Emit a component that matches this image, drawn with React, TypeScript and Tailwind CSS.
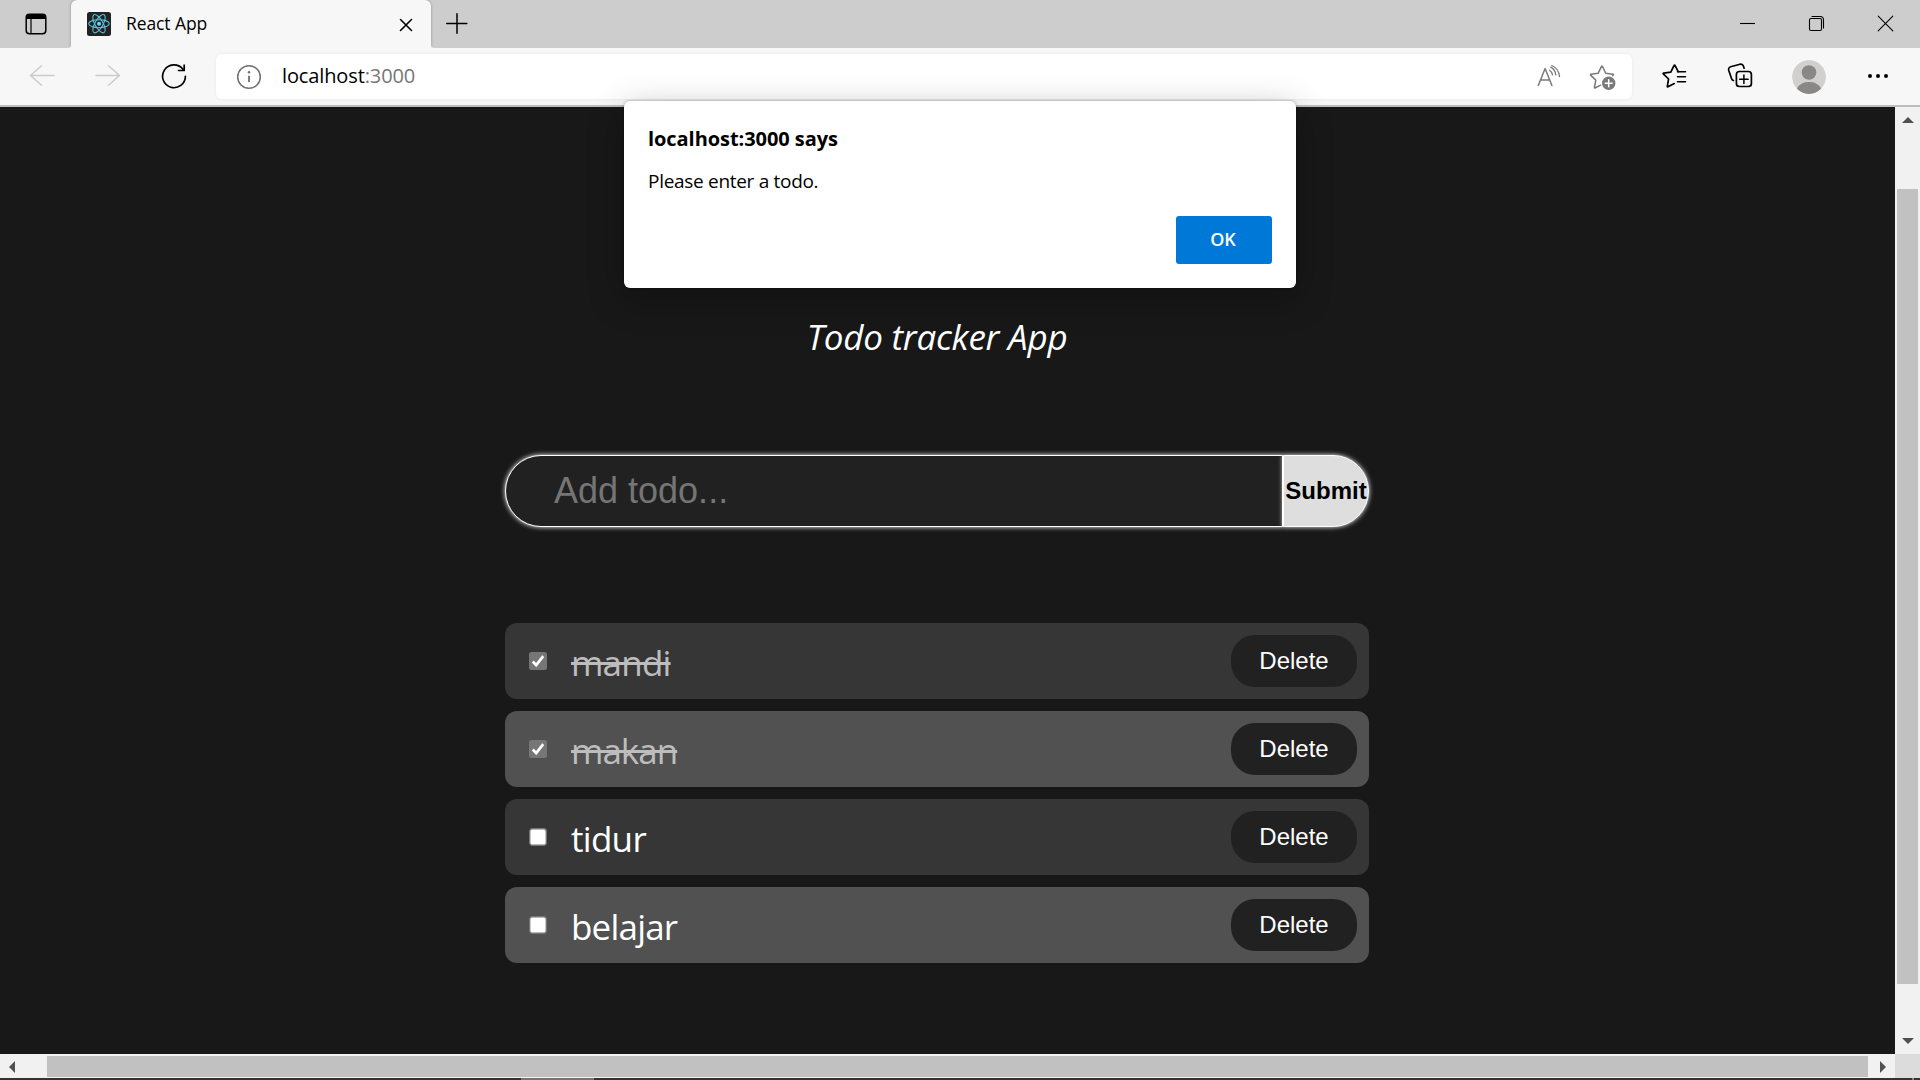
import type { ReactNode } from 'react';

type IconProps = { box: string; className: string; children: ReactNode };

function Icon({ box, className, children }: IconProps) {
  return (
    <svg
      viewBox={box}
      className={`shrink-0 ${className}`}
      fill="none"
      stroke="currentColor"
      strokeWidth="1.5"
      strokeLinecap="round"
      strokeLinejoin="round"
    >
      {children}
    </svg>
  );
}

function TabBar() {
  return (
    <div className="flex h-12 items-start bg-[#cdcdcd] text-black">
      <Icon box="0 0 24 24" className="ml-6 mt-3 h-6 w-6">
        <rect x="2.2" y="2.2" width="19.6" height="19.6" rx="3.2" />
        <path d="M2 7V5a3 3 0 0 1 3-3h14a3 3 0 0 1 3 3v2z" fill="currentColor" stroke="none" />
        <path d="M7 7v14.5" strokeWidth="1.2" />
      </Icon>
      <div className="ml-[18px] h-1 w-[5px] self-end bg-[#f7f7f7]">
        <div className="h-1 w-[5px] rounded-br-[4px] bg-[#cdcdcd]" />
      </div>
      <div className="flex h-12 w-[360px] items-center rounded-t-[6px] bg-[#f7f7f7] pl-4 shadow-[0_0_3px_rgba(0,0,0,0.3)] [clip-path:inset(0_-4px_0_-4px)]">
        <svg viewBox="0 0 24 24" className="h-6 w-6" fill="none" stroke="#58c4dc" strokeWidth="1.1">
          <rect width="24" height="24" rx="2.5" fill="#222222" stroke="none" />
          <ellipse cx="12" cy="11.7" rx="10.3" ry="4" />
          <ellipse cx="12" cy="11.7" rx="10.3" ry="4" transform="rotate(60 12 11.7)" />
          <ellipse cx="12" cy="11.7" rx="10.3" ry="4" transform="rotate(120 12 11.7)" />
          <circle cx="12" cy="11.7" r="2" fill="#61dafb" stroke="none" />
        </svg>
        <span className="ml-[15px] w-[273px] pb-[2px] text-[17.5px] leading-6 tracking-[-0.1px]">React App</span>
        <Icon box="0 0 14 14" className="mt-px h-[14px] w-[14px]">
          <path d="M1.5 1.5l11 11M12.5 1.5l-11 11" strokeWidth="1.6" />
        </Icon>
      </div>
      <div className="h-1 w-[5px] self-end bg-[#f7f7f7]">
        <div className="h-1 w-[5px] rounded-bl-[4px] bg-[#cdcdcd]" />
      </div>
      <Icon box="0 0 22 22" className="ml-[10px] mt-[13px] h-[22px] w-[22px]">
        <path d="M11 .8v19.5M.8 10.5h20" />
      </Icon>
      <div className="ml-auto mr-[26px] mt-[15px] flex items-start gap-[51px]">
        <Icon box="0 0 17 17" className="h-[17px] w-[17px]">
          <path d="M0 8.5h15" strokeWidth="1.1" strokeLinecap="butt" />
        </Icon>
        <Icon box="0 0 18 18" className="h-[18px] w-[18px]">
          <rect x="1.5" y="3.5" width="12" height="12" rx="1.5" strokeWidth="1.1" />
          <path d="M4 1.5h8.5a3 3 0 0 1 3 3V13" strokeWidth="1.1" />
        </Icon>
        <Icon box="0 0 17 17" className="h-[17px] w-[17px]">
          <path d="M1.2 1.2l14.6 14.6M15.8 1.2L1.2 15.8" strokeWidth="1.1" />
        </Icon>
      </div>
    </div>
  );
}

function Toolbar() {
  return (
    <div className="flex h-[59px] items-start border-b-2 border-[#bdbdbd] bg-[#f7f7f7] pt-[6px] text-black">
      <div className="flex h-[45px] w-[216px] items-center pb-px pl-[29px]">
        <Icon box="0 0 26 24" className="h-6 w-[26px] text-[#cbcbcb]">
          <path d="M25 11.5H1.5M12.5 1.8L1.5 11.5l11 9.7" />
        </Icon>
        <Icon box="0 0 26 24" className="ml-10 h-6 w-[26px] text-[#cbcbcb]">
          <path d="M1 11.5h23.5M13.5 1.8l11 9.7-11 9.7" />
        </Icon>
        <Icon box="0 0 26 26" className="ml-10 h-[26px] w-[26px]">
          <path d="M24.4 13.3A11.4 11.4 0 1 1 21.6 5.8l1.4 1.4" strokeWidth="1.7" />
          <path d="M23.2 1.5v6h-6.4" strokeWidth="1.7" strokeLinecap="butt" />
        </Icon>
      </div>
      <div className="flex h-[45px] w-[1416px] items-center rounded-[6px] bg-white pl-5 shadow-[0_0_4px_rgba(0,0,0,0.06)]">
        <Icon box="0 0 26 26" className="h-[26px] w-[26px] text-[#6f6f6f]">
          <circle cx="13" cy="13" r="11.3" />
          <path d="M13 11.8v6.2" strokeLinecap="butt" strokeWidth="1.8" />
          <circle cx="13" cy="8.3" r="1.2" fill="currentColor" stroke="none" />
        </Icon>
        <span className="ml-5 pb-[2px] text-[20px] leading-7 tracking-[-0.12px]">
          localhost<span className="text-[#767676]">:3000</span>
        </span>
        <Icon box="1536 63.5 26 26" className="ml-auto h-[26px] w-[26px] text-[#7a7a7a]">
          <path d="M1538.3 85l6.8-17 6.8 17M1540.6 79.5h9" />
          <path d="M1549.5 69.8c1.7 1 2.6 2.5 3 4.5M1550.8 66.6c2.7 1.6 4.7 4.4 5 7.8M1551.8 65c4.2 1.8 7.2 5.6 7.7 11" strokeWidth="1.3" />
        </Icon>
        <Icon box="1589 63 28 28" className="ml-[27px] mr-[15px] h-7 w-7 text-[#7a7a7a]">
          <path d="M1600.6 85.2L1595 88c-.4.2-.7 0-.6-.5l1.4-7.4-5.2-5c-.3-.3-.2-.7.3-.8l7.2-1L1601.5 66.3c.2-.5.7-.5.9 0l3.3 6.9 7.3 1.1c.5.1.6.4.3.8l-.5.5" />
          <circle cx="1608.7" cy="83.3" r="6.7" fill="currentColor" stroke="none" />
          <path d="M1608.7 79.8v7M1605.2 83.3h7" stroke="white" />
        </Icon>
      </div>
      <div className="flex h-[45px] items-center pb-px">
        <Icon box="1660 63 28 28" className="ml-7 h-7 w-7">
          <path d="M1674.3 84.6L1668 87.8c-.5.2-.8 0-.7-.5l1.3-7.3-5.3-5.1c-.3-.3-.2-.7.3-.8l7.2-1 3.3-6.7c.2-.5.7-.5.9 0l3.2 6.3" strokeWidth="1.7" />
          <path d="M1677.5 72.7h8M1677.5 77.7h8M1677.5 82.7h8" strokeWidth="1.6" />
        </Icon>
        <Icon box="1726 63 28 28" className="ml-[38px] h-7 w-7">
          <rect x="1736.4" y="72.5" width="15" height="15" rx="3" strokeWidth="1.7" />
          <path d="M1743.9 76v8.5M1739.6 80.2h8.6" />
          <path d="M1733.5 81.5a3 3 0 0 1-2-2L1728.7 71.2a2.8 2.8 0 0 1 1.9-3.5l9.4-2.5a3 3 0 0 1 3.5 2l.6 2" strokeWidth="1.7" />
        </Icon>
        <svg viewBox="0 0 34 34" className="ml-[38px] mt-px h-[34px] w-[34px] overflow-hidden rounded-full">
          <circle cx="17" cy="17" r="17" fill="#d2d0ce" />
          <circle cx="17" cy="12.5" r="7.3" fill="#8a8886" />
          <path d="M4.8 28.7C7.5 23.8 11.8 22 17 22s9.5 1.8 12.2 6.7A17 17 0 0 1 17 34 17 17 0 0 1 4.8 28.7z" fill="#8a8886" />
        </svg>
        <svg viewBox="0 0 22 6" className="ml-[41px] h-[6px] w-[22px]">
          <circle cx="3" cy="3" r="2" />
          <circle cx="11" cy="3" r="2" />
          <circle cx="19" cy="3" r="2" />
        </svg>
      </div>
    </div>
  );
}

function AlertDialog() {
  return (
    <div className="absolute left-[624px] top-[101px] flex h-[187px] w-[672px] flex-col rounded-[6px] bg-white px-6 pt-[23px] text-black shadow-[0_0_3px_rgba(0,0,0,0.3),0_10px_36px_rgba(0,0,0,0.3)]">
      <h2 className="text-[20px] font-bold leading-[30px] tracking-[-0.06px]">localhost:3000 says</h2>
      <p className="mt-3 text-[19px] leading-[30px] tracking-[-0.3px]">Please enter a todo.</p>
      <button className="mt-5 h-12 w-24 self-end rounded-[3px] bg-[#0078d7] pb-[2px] pr-[2px] text-[18px] font-semibold text-white">
        OK
      </button>
    </div>
  );
}

const todos = [
  { text: 'mandi', done: true, bg: 'bg-[#363636]', tracking: 'tracking-[-0.8px]' },
  { text: 'makan', done: true, bg: 'bg-[#515151]', tracking: 'tracking-[-1px]' },
  { text: 'tidur', done: false, bg: 'bg-[#363636]', tracking: 'tracking-[-0.7px]' },
  { text: 'belajar', done: false, bg: 'bg-[#515151]', tracking: 'tracking-[-0.8px]' },
];

function Checkbox({ checked }: { checked: boolean }) {
  return (
    <svg viewBox="0 0 18 18" className="h-[18px] w-[18px] shrink-0">
      {checked ? (
        <>
          <rect width="18" height="18" rx="2.5" fill="#767676" />
          <path d="M3.8 9.5l3.4 3.6L14.2 4.2" fill="none" stroke="white" strokeWidth="2.7" />
        </>
      ) : (
        <rect x="0.75" y="0.75" width="16.5" height="16.5" rx="2.5" fill="white" stroke="#767676" strokeWidth="1.3" />
      )}
    </svg>
  );
}

function TodoApp() {
  return (
    <main className="h-[947px] w-[1895px] overflow-hidden bg-[#181818] pl-[505px] pt-[206px] text-white">
      <div className="w-[864px]">
        <h1 className="text-center text-[35px] italic leading-[48px] tracking-[-0.25px]">Todo tracker App</h1>
        <form className="mt-[94px] flex h-[72px] font-['Liberation_Sans',sans-serif]">
          <input
            readOnly
            placeholder="Add todo..."
            className="h-[72px] w-[778px] rounded-l-[36px] border border-white bg-[#212121] pl-12 text-[36px] shadow-[0_0_5px_white] outline-none placeholder:text-[#757575]"
          />
          <button
            type="button"
            className="h-[72px] w-[86px] whitespace-nowrap rounded-r-[36px] border border-white bg-[#dedede] text-[24px] font-bold text-black shadow-[0_0_5px_white]"
          >
            Submit
          </button>
        </form>
        <ul className="mt-24 flex flex-col gap-3">
          {todos.map((todo) => (
            <li key={todo.text} className={`flex h-[76px] items-center rounded-xl pl-6 pr-3 ${todo.bg}`}>
              <Checkbox checked={todo.done} />
              <span
                className={`ml-6 pt-[3px] text-[35px] leading-[48px] ${todo.tracking} ${
                  todo.done ? 'text-[#bdbdbd] line-through decoration-[3px]' : 'text-white'
                }`}
              >
                {todo.text}
              </span>
              <button className="ml-auto h-[52px] w-[126px] rounded-[24px] bg-[#212121] font-['Liberation_Sans',sans-serif] text-[24px] text-white">
                Delete
              </button>
            </li>
          ))}
        </ul>
      </div>
    </main>
  );
}

function VerticalScrollbar() {
  return (
    <div className="flex h-[947px] w-[25px] flex-col items-center bg-[#f1f1f1] text-[#505050]">
      <svg viewBox="0 0 12 6" className="mt-[10px] h-[6px] w-3" fill="currentColor">
        <path d="M6 0l6 6H0z" />
      </svg>
      <div className="mt-[66px] h-[795px] w-[21px] bg-[#c1c1c1]" />
      <svg viewBox="0 0 12 6" className="mt-[54px] h-[6px] w-3" fill="currentColor">
        <path d="M6 6l6-6H0z" />
      </svg>
    </div>
  );
}

function HorizontalScrollbar() {
  return (
    <div className="flex h-6 text-[#505050]">
      <div className="flex w-[1895px] items-center bg-[#f1f1f1]">
        <svg viewBox="0 0 6 12" className="ml-[9px] mt-px h-3 w-[6px]" fill="currentColor">
          <path d="M0 6l6-6v12z" />
        </svg>
        <div className="ml-8 mt-px h-[21px] w-[1821px] bg-[#c1c1c1]" />
        <svg viewBox="0 0 6 12" className="ml-3 mt-px h-3 w-[6px]" fill="currentColor">
          <path d="M6 6L0 0v12z" />
        </svg>
      </div>
      <div className="w-[25px] bg-[#dcdcdc]" />
    </div>
  );
}

export default function App() {
  return (
    <div className="relative h-[1080px] w-[1920px] overflow-hidden font-['Open_Sans',sans-serif]">
      <TabBar />
      <Toolbar />
      <div className="flex">
        <TodoApp />
        <VerticalScrollbar />
      </div>
      <HorizontalScrollbar />
      <div className="flex h-[2px] bg-[#333333]">
        <div className="ml-[521px] h-[2px] w-[73px] bg-[#757575]" />
        <div className="ml-auto mr-[6px] h-[2px] w-[2px] bg-[#858585]" />
      </div>
      <AlertDialog />
    </div>
  );
}
